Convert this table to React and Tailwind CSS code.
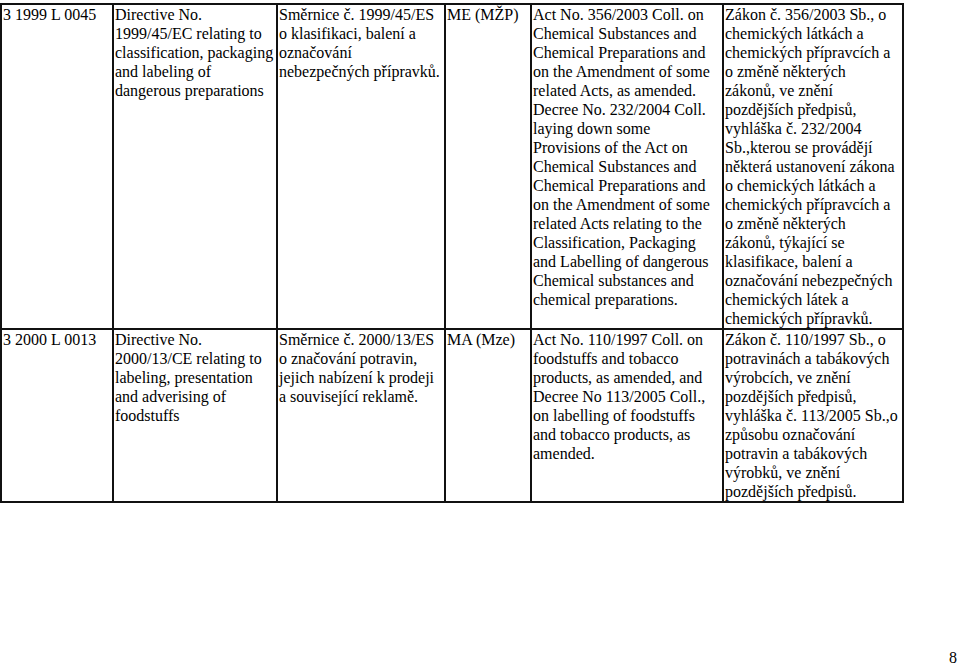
const rows = [
  [
    ["3 1999 L 0045"],
    [
      "Directive No.",
      "1999/45/EC relating to",
      "classification, packaging",
      "and labeling of",
      "dangerous preparations",
    ],
    [
      "Směrnice č. 1999/45/ES",
      "o klasifikaci, balení a",
      "označování",
      "nebezpečných přípravků.",
    ],
    ["ME (MŽP)"],
    [
      "Act No. 356/2003 Coll. on",
      "Chemical Substances and",
      "Chemical Preparations and",
      "on the Amendment of some",
      "related Acts, as amended.",
      "Decree No. 232/2004 Coll.",
      "laying down some",
      "Provisions of the Act on",
      "Chemical Substances and",
      "Chemical Preparations and",
      "on the Amendment of some",
      "related Acts relating to the",
      "Classification, Packaging",
      "and Labelling of dangerous",
      "Chemical substances and",
      "chemical preparations.",
    ],
    [
      "Zákon č. 356/2003 Sb., o",
      "chemických látkách a",
      "chemických přípravcích a",
      "o změně některých",
      "zákonů, ve znění",
      "pozdějších předpisů,",
      "vyhláška č. 232/2004",
      "Sb.,kterou se provádějí",
      "některá ustanovení zákona",
      "o chemických látkách a",
      "chemických přípravcích a",
      "o změně některých",
      "zákonů, týkající se",
      "klasifikace, balení a",
      "označování nebezpečných",
      "chemických látek a",
      "chemických přípravků.",
    ],
  ],
  [
    ["3 2000 L 0013"],
    [
      "Directive No.",
      "2000/13/CE relating to",
      "labeling, presentation",
      "and adverising of",
      "foodstuffs",
    ],
    [
      "Směrnice č. 2000/13/ES",
      "o značování potravin,",
      "jejich nabízení k prodeji",
      "a související reklamě.",
    ],
    ["MA (Mze)"],
    [
      "Act No. 110/1997 Coll. on",
      "foodstuffs and tobacco",
      "products, as amended, and",
      "Decree No 113/2005 Coll.,",
      "on labelling of foodstuffs",
      "and tobacco products, as",
      "amended.",
    ],
    [
      "Zákon č. 110/1997 Sb., o",
      "potravinách a tabákových",
      "výrobcích, ve znění",
      "pozdějších předpisů,",
      "vyhláška č. 113/2005 Sb.,o",
      "způsobu označování",
      "potravin a tabákových",
      "výrobků, ve znění",
      "pozdějších předpisů.",
    ],
  ],
];

const widths = ["w-[112px]", "w-[164px]", "w-[168px]", "w-[86px]", "w-[192px]", "w-[180px]"];

export default function App() {
  return (
    <div className="w-[960px] h-[669px] flex flex-col justify-between bg-white text-black font-['Liberation_Serif','Times_New_Roman',serif] text-[16px] leading-[19px]">
      <div className="pt-[3px]">
        <table className="table-fixed border-collapse border-2 border-[#111] w-[903px]">
          <colgroup>
            {widths.map((w, i) => (
              <col key={i} className={w} />
            ))}
          </colgroup>
          <tbody>
            {rows.map((row, r) => (
              <tr key={r}>
                {row.map((lines, c) => (
                  <td
                    key={c}
                    className="border-2 border-[#111] align-top p-0 pl-[1px] whitespace-nowrap overflow-hidden"
                  >
                    {lines.map((l, k) => (
                      <div key={k}>{l}</div>
                    ))}
                  </td>
                ))}
              </tr>
            ))}
          </tbody>
        </table>
      </div>
      <div className="pr-[3px] pb-[1px] text-right leading-[20px]">8</div>
    </div>
  );
}
